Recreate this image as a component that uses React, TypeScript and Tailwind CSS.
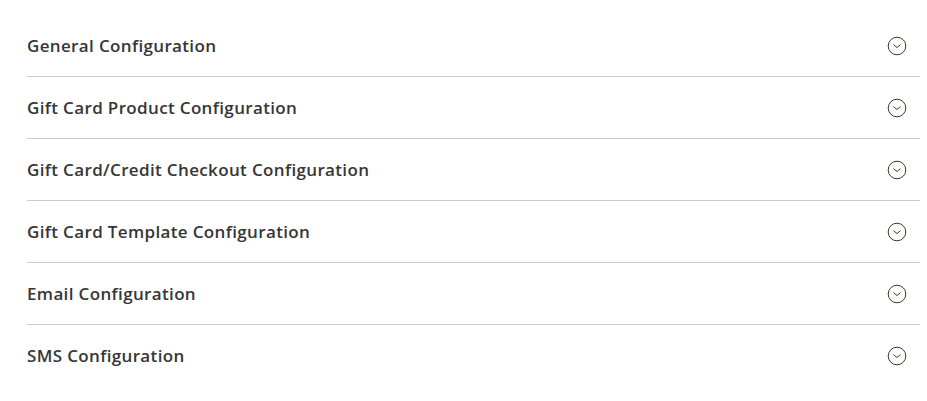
import React from "react";

const items = [
  "General Configuration",
  "Gift Card Product Configuration",
  "Gift Card/Credit Checkout Configuration",
  "Gift Card Template Configuration",
  "Email Configuration",
  "SMS Configuration",
];

function ChevronCircle() {
  return (
    <svg width="20" height="20" viewBox="0 0 20 20" fill="none">
      <circle cx="10" cy="10" r="8.8" stroke="#41362f" strokeWidth="1" />
      <path d="M6.8 8.9 L10 11.5 L13.2 8.9" stroke="#41362f" strokeWidth="1" strokeLinecap="round" strokeLinejoin="round" />
    </svg>
  );
}

export default function App() {
  return (
    <div className="w-[927px] h-[401px] bg-white pt-[15px] pl-[27px] pr-[7px]" style={{ fontFamily: '"Open Sans", sans-serif' }}>
      {items.map((t, i) => (
        <div
          key={t}
          className={`flex items-center justify-between h-[62px] ${i < items.length - 1 ? "border-b border-[#cccccc]" : ""}`}
        >
          <span className="text-[17px] font-semibold text-[#363636] tracking-[0.35px]">{t}</span>
          <span className="mr-[13px] flex items-center">
            <ChevronCircle />
          </span>
        </div>
      ))}
    </div>
  );
}
